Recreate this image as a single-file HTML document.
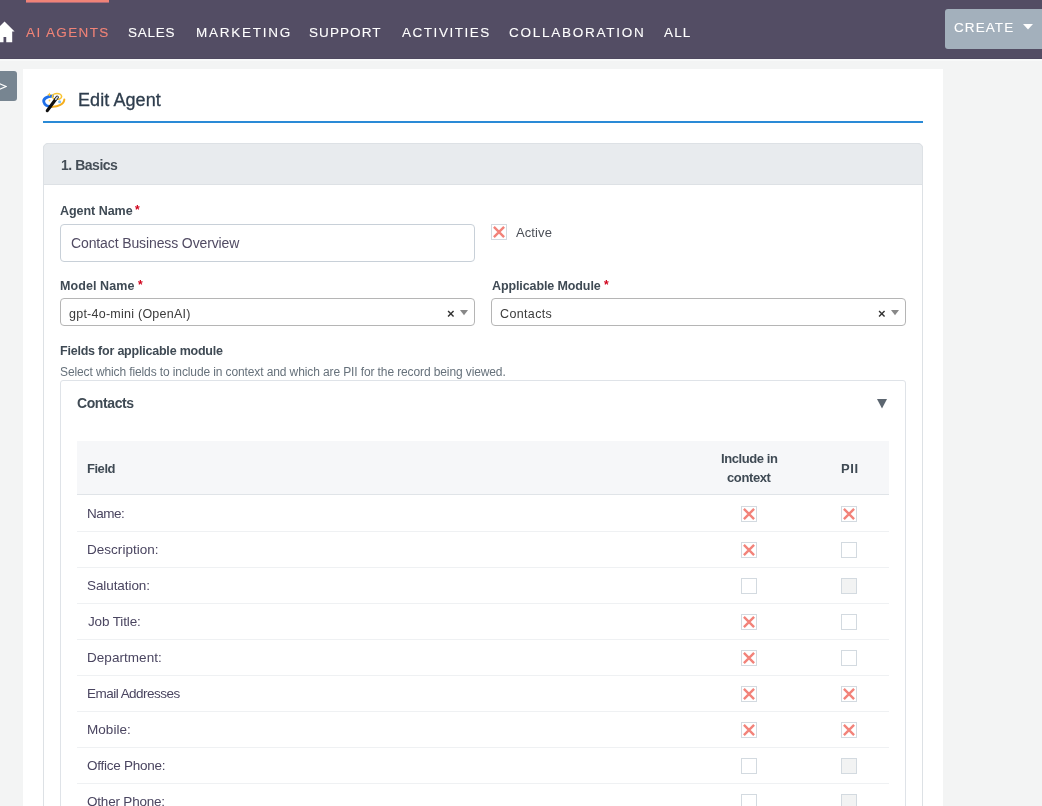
<!DOCTYPE html>
<html><head><meta charset="utf-8">
<style>
*{box-sizing:border-box;margin:0;padding:0}
html,body{width:1042px;height:806px;overflow:hidden;background:#f3f4f4;font-family:"Liberation Sans",sans-serif;position:relative}
.t{position:absolute;white-space:nowrap;line-height:1;will-change:transform}
.b{position:absolute}
svg{position:absolute;display:block}
.cb{position:absolute;width:16px;height:16px;border:1px solid #d3dae0;background:#fff}
.cb.dis{background:#f2f3f3}
.cb svg.x{left:-1px;top:-1px}
</style></head><body>

<div class="b" style="left:0px;top:0px;width:1042px;height:59px;background:#534d64"></div>
<div class="b" style="left:0px;top:58px;width:1042px;height:1px;background:#4f4960"></div>
<div class="b" style="left:0px;top:59px;width:1042px;height:2px;background:#f8f9f9"></div>
<div class="b" style="left:26px;top:0px;width:83px;height:3px;background:linear-gradient(#f08377 0,#f08377 2px,#a86a7a 2px)"></div>
<svg style="left:-6px;top:20.5px" width="22" height="22" viewBox="0 0 22 22"><path d="M10.5 0.5 L20.6 10.4 L18.2 10.4 L18.2 21.3 L12.25 21.3 L12.25 16 L9.5 16 L9.5 21.3 L3 21.3 L3 10.4 L0.4 10.4 Z" fill="#fff"/></svg>
<div class="t" style="left:26.0px;top:25.7px;font-size:13.5px;letter-spacing:1.375px;color:#f08377;-webkit-text-stroke:0.1px #f08377">AI AGENTS</div>
<div class="t" style="left:128.4px;top:25.7px;font-size:13.5px;letter-spacing:0.775px;color:#fff;-webkit-text-stroke:0.1px #fff">SALES</div>
<div class="t" style="left:195.5px;top:25.7px;font-size:13.5px;letter-spacing:1.761px;color:#fff;-webkit-text-stroke:0.1px #fff">MARKETING</div>
<div class="t" style="left:309.2px;top:25.7px;font-size:13.5px;letter-spacing:1.083px;color:#fff;-webkit-text-stroke:0.1px #fff">SUPPORT</div>
<div class="t" style="left:402.3px;top:25.7px;font-size:13.5px;letter-spacing:1.534px;color:#fff;-webkit-text-stroke:0.1px #fff">ACTIVITIES</div>
<div class="t" style="left:509.4px;top:25.7px;font-size:13.5px;letter-spacing:1.75px;color:#fff;-webkit-text-stroke:0.1px #fff">COLLABORATION</div>
<div class="t" style="left:664.3px;top:25.7px;font-size:13.5px;letter-spacing:1.15px;color:#fff;-webkit-text-stroke:0.1px #fff">ALL</div>
<div class="b" style="left:945px;top:9px;width:100px;height:40px;background:#a3b0bc;border-radius:3px"></div>
<div class="t" style="left:954.0px;top:21.0px;font-size:13.5px;letter-spacing:1.08px;color:#fff;-webkit-text-stroke:0.1px #fff">CREATE</div>
<svg style="left:1023px;top:24px" width="10" height="6" viewBox="0 0 10 6"><path d="M0 0 L10 0 L5 5.5 Z" fill="#fff"/></svg>
<div class="b" style="left:23px;top:69px;width:920px;height:760px;background:#fff"></div>
<div class="b" style="left:-4px;top:71px;width:21px;height:30px;background:#778591;border-radius:3px"></div>
<svg style="left:-1px;top:82px" width="8" height="9" viewBox="0 0 8 9"><path d="M-2 0.5 L7 4.5 L-2 8.5" fill="none" stroke="#fff" stroke-width="1.2"/></svg>
<svg style="left:40px;top:88px" width="30" height="28" viewBox="0 0 30 28">
<path d="M12.5 8 C6.5 8.3 3 11 3.8 14 C4.6 17 8 18.6 11.5 18.6" fill="none" stroke="#1f6fe8" stroke-width="2.8" stroke-linecap="round"/>
<ellipse cx="17" cy="8.4" rx="4.6" ry="2.9" fill="none" stroke="#f9c535" stroke-width="1.6"/>
<path d="M11.5 18.8 C18 19.2 24.3 16 24.3 11.5" fill="none" stroke="#f6ae1e" stroke-width="2" stroke-linecap="round"/>
<path d="M9.4 4.6 L10.1 6 L11.5 6.6 L10.1 7.2 L9.4 8.6 L8.7 7.2 L7.3 6.6 L8.7 6 Z" fill="#f8c232"/>
<circle cx="19.6" cy="13.7" r="1.5" fill="#7cc0f5"/>
<circle cx="9.5" cy="12.5" r="0.9" fill="#f8d060"/>
<line x1="7.3" y1="22.6" x2="17.2" y2="9.3" stroke="#111" stroke-width="3.2" stroke-linecap="round"/>
<line x1="15.8" y1="11.2" x2="17.2" y2="9.3" stroke="#c9d3e0" stroke-width="1.8" stroke-linecap="round"/>
</svg>
<div class="t" style="left:78.0px;top:91.2px;font-size:18.0px;letter-spacing:0.078px;color:#2e3d4d;-webkit-text-stroke:0.3px #2e3d4d">Edit Agent</div>
<div class="b" style="left:43px;top:121px;width:880px;height:2px;background:#2a8ad6"></div>
<div class="b" style="left:43px;top:143px;width:880px;height:700px;border:1px solid #dde1e5;border-radius:5px;background:#fff"></div>
<div class="b" style="left:43px;top:143px;width:880px;height:42px;border:1px solid #dde1e5;border-radius:5px 5px 0 0;background:#e8ebee"></div>
<div class="t" style="left:60.9px;top:158.0px;font-size:14.0px;letter-spacing:-0.475px;color:#454e57;font-weight:bold">1. Basics</div>
<div class="t" style="left:60.1px;top:204.8px;font-size:12.5px;letter-spacing:-0.033px;color:#3f4a54;font-weight:bold">Agent Name</div>
<div class="t" style="left:135px;top:204px;font-size:12px;font-weight:bold;color:#d0021b">*</div>
<div class="b" style="left:60px;top:224px;width:415px;height:38px;border:1px solid #c8d0d8;border-radius:4px"></div>
<div class="t" style="left:70.9px;top:236.2px;font-size:14.0px;letter-spacing:-0.116px;color:#514b63">Contact Business Overview</div>
<div class="cb" style="left:491px;top:224px"><svg class="x" width="16" height="16" viewBox="0 0 16 16"><path d="M2.9 2.9 L13.1 13.1 M13.1 2.9 L2.9 13.1" stroke="#f2837a" stroke-width="2.4" stroke-linecap="butt"/></svg></div>
<div class="t" style="left:515.7px;top:226.0px;font-size:13.0px;letter-spacing:0.1px;color:#4c5058">Active</div>
<div class="t" style="left:59.8px;top:279.8px;font-size:12.5px;letter-spacing:0.078px;color:#3f4a54;font-weight:bold">Model Name</div>
<div class="t" style="left:137.5px;top:279px;font-size:12px;font-weight:bold;color:#d0021b">*</div>
<div class="b" style="left:60px;top:298px;width:415px;height:28px;border:1px solid #b5b5b5;border-radius:4px"></div>
<div class="t" style="left:69.4px;top:308.0px;font-size:12.5px;letter-spacing:0.248px;color:#3b3b3b">gpt-4o-mini (OpenAI)</div>
<div class="t" style="left:447px;top:306.5px;font-size:13px;font-weight:bold;color:#333">&#215;</div>
<svg style="left:460px;top:310px" width="8" height="6" viewBox="0 0 8 6"><path d="M0 0 L8 0 L4 5.3 Z" fill="#888"/></svg>
<div class="t" style="left:491.7px;top:279.8px;font-size:12.5px;letter-spacing:-0.107px;color:#3f4a54;font-weight:bold">Applicable Module</div>
<div class="t" style="left:603.5px;top:279px;font-size:12px;font-weight:bold;color:#d0021b">*</div>
<div class="b" style="left:491px;top:298px;width:415px;height:28px;border:1px solid #b5b5b5;border-radius:4px"></div>
<div class="t" style="left:500.4px;top:307.7px;font-size:12.5px;letter-spacing:0.357px;color:#3b3b3b">Contacts</div>
<div class="t" style="left:878px;top:306.5px;font-size:13px;font-weight:bold;color:#333">&#215;</div>
<svg style="left:891px;top:310px" width="8" height="6" viewBox="0 0 8 6"><path d="M0 0 L8 0 L4 5.3 Z" fill="#888"/></svg>
<div class="t" style="left:59.8px;top:344.7px;font-size:12.5px;letter-spacing:-0.214px;color:#3f4a54;font-weight:bold">Fields for applicable module</div>
<div class="t" style="left:59.8px;top:366.3px;font-size:12.0px;letter-spacing:-0.113px;color:#66717b">Select which fields to include in context and which are PII for the record being viewed.</div>
<div class="b" style="left:60px;top:380px;width:846px;height:500px;border:1px solid #dfe3e8;border-radius:3px"></div>
<div class="t" style="left:76.7px;top:396.3px;font-size:14.0px;letter-spacing:-0.4px;color:#3f4a54;font-weight:bold">Contacts</div>
<svg style="left:877px;top:399px" width="10" height="10" viewBox="0 0 10 10"><path d="M0 0 L10 0 L5 9.5 Z" fill="#5c6670"/></svg>
<div class="b" style="left:77px;top:441px;width:812px;height:54px;background:#f6f7f9;border-bottom:1px solid #e0e4e8"></div>
<div class="t" style="left:86.95px;top:461.85px;font-size:13.0px;letter-spacing:-0.464px;color:#3f4a54;font-weight:bold">Field</div>
<div class="t" style="left:720.5px;top:452.4px;font-size:13.0px;letter-spacing:-0.423px;color:#3f4a54;font-weight:bold">Include in</div>
<div class="t" style="left:727.2px;top:470.7px;font-size:13.0px;letter-spacing:-0.384px;color:#3f4a54;font-weight:bold">context</div>
<div class="t" style="left:840.7px;top:462.1px;font-size:13.0px;letter-spacing:0.65px;color:#3f4a54;font-weight:bold">PII</div>
<div class="b" style="left:77px;top:531px;width:812px;height:1px;background:#eff1f3"></div>
<div class="t" style="left:87.0px;top:507.0px;font-size:13.5px;letter-spacing:-0.5px;color:#4a4560">Name:</div>
<div class="cb" style="left:741px;top:506px"><svg class="x" width="16" height="16" viewBox="0 0 16 16"><path d="M2.9 2.9 L13.1 13.1 M13.1 2.9 L2.9 13.1" stroke="#f2837a" stroke-width="2.4" stroke-linecap="butt"/></svg></div>
<div class="cb" style="left:841px;top:506px"><svg class="x" width="16" height="16" viewBox="0 0 16 16"><path d="M2.9 2.9 L13.1 13.1 M13.1 2.9 L2.9 13.1" stroke="#f2837a" stroke-width="2.4" stroke-linecap="butt"/></svg></div>
<div class="b" style="left:77px;top:567px;width:812px;height:1px;background:#eff1f3"></div>
<div class="t" style="left:87.0px;top:543.0px;font-size:13.5px;letter-spacing:0.027px;color:#4a4560">Description:</div>
<div class="cb" style="left:741px;top:542px"><svg class="x" width="16" height="16" viewBox="0 0 16 16"><path d="M2.9 2.9 L13.1 13.1 M13.1 2.9 L2.9 13.1" stroke="#f2837a" stroke-width="2.4" stroke-linecap="butt"/></svg></div>
<div class="cb" style="left:841px;top:542px"></div>
<div class="b" style="left:77px;top:603px;width:812px;height:1px;background:#eff1f3"></div>
<div class="t" style="left:87.0px;top:579.0px;font-size:13.5px;letter-spacing:-0.08px;color:#4a4560">Salutation:</div>
<div class="cb" style="left:741px;top:578px"></div>
<div class="cb dis" style="left:841px;top:578px"></div>
<div class="b" style="left:77px;top:639px;width:812px;height:1px;background:#eff1f3"></div>
<div class="t" style="left:88.0px;top:615.0px;font-size:13.5px;letter-spacing:-0.133px;color:#4a4560">Job Title:</div>
<div class="cb" style="left:741px;top:614px"><svg class="x" width="16" height="16" viewBox="0 0 16 16"><path d="M2.9 2.9 L13.1 13.1 M13.1 2.9 L2.9 13.1" stroke="#f2837a" stroke-width="2.4" stroke-linecap="butt"/></svg></div>
<div class="cb" style="left:841px;top:614px"></div>
<div class="b" style="left:77px;top:675px;width:812px;height:1px;background:#eff1f3"></div>
<div class="t" style="left:87.0px;top:651.0px;font-size:13.5px;letter-spacing:0.05px;color:#4a4560">Department:</div>
<div class="cb" style="left:741px;top:650px"><svg class="x" width="16" height="16" viewBox="0 0 16 16"><path d="M2.9 2.9 L13.1 13.1 M13.1 2.9 L2.9 13.1" stroke="#f2837a" stroke-width="2.4" stroke-linecap="butt"/></svg></div>
<div class="cb" style="left:841px;top:650px"></div>
<div class="b" style="left:77px;top:711px;width:812px;height:1px;background:#eff1f3"></div>
<div class="t" style="left:87.0px;top:687.0px;font-size:13.5px;letter-spacing:-0.521px;color:#4a4560">Email Addresses</div>
<div class="cb" style="left:741px;top:686px"><svg class="x" width="16" height="16" viewBox="0 0 16 16"><path d="M2.9 2.9 L13.1 13.1 M13.1 2.9 L2.9 13.1" stroke="#f2837a" stroke-width="2.4" stroke-linecap="butt"/></svg></div>
<div class="cb" style="left:841px;top:686px"><svg class="x" width="16" height="16" viewBox="0 0 16 16"><path d="M2.9 2.9 L13.1 13.1 M13.1 2.9 L2.9 13.1" stroke="#f2837a" stroke-width="2.4" stroke-linecap="butt"/></svg></div>
<div class="b" style="left:77px;top:747px;width:812px;height:1px;background:#eff1f3"></div>
<div class="t" style="left:87.0px;top:723.0px;font-size:13.5px;letter-spacing:0.05px;color:#4a4560">Mobile:</div>
<div class="cb" style="left:741px;top:722px"><svg class="x" width="16" height="16" viewBox="0 0 16 16"><path d="M2.9 2.9 L13.1 13.1 M13.1 2.9 L2.9 13.1" stroke="#f2837a" stroke-width="2.4" stroke-linecap="butt"/></svg></div>
<div class="cb" style="left:841px;top:722px"><svg class="x" width="16" height="16" viewBox="0 0 16 16"><path d="M2.9 2.9 L13.1 13.1 M13.1 2.9 L2.9 13.1" stroke="#f2837a" stroke-width="2.4" stroke-linecap="butt"/></svg></div>
<div class="b" style="left:77px;top:783px;width:812px;height:1px;background:#eff1f3"></div>
<div class="t" style="left:87.0px;top:759.0px;font-size:13.5px;letter-spacing:-0.258px;color:#4a4560">Office Phone:</div>
<div class="cb" style="left:741px;top:758px"></div>
<div class="cb dis" style="left:841px;top:758px"></div>
<div class="b" style="left:77px;top:819px;width:812px;height:1px;background:#eff1f3"></div>
<div class="t" style="left:87.0px;top:795.0px;font-size:13.5px;letter-spacing:-0.199px;color:#4a4560">Other Phone:</div>
<div class="cb" style="left:741px;top:794px"></div>
<div class="cb dis" style="left:841px;top:794px"></div>
</body></html>
